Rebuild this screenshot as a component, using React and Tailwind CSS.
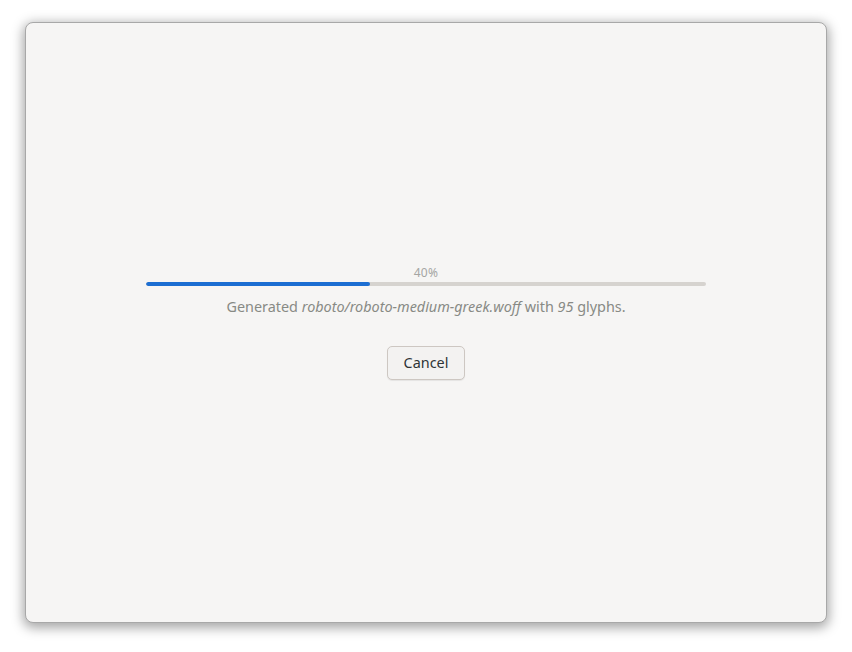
export default function App() {
  const progress = 0.4;
  return (
    <div className="flex h-[652px] w-[852px] bg-white p-0" style={{ fontFamily: '"Noto Sans", "Open Sans", sans-serif' }}>
      <div className="ml-[25px] mt-[22px] flex h-[601px] w-[802px] flex-col items-center justify-center rounded-[8px] border border-[#a8a8a8] bg-[#f6f5f4] pt-[24px] shadow-[0_3px_12px_2px_rgba(0,0,0,0.35)]">
        <div className="flex w-[560px] flex-col items-center">
          <div className="mt-[-24px] text-[12px] leading-[14px] tracking-[0.3px] text-[#a5a5a3]">40%</div>
          <div className="mt-[2px] h-[4px] w-[560px] overflow-hidden rounded-full bg-[#d6d3cf]">
            <div className="h-full rounded-full bg-[#1c6ed2]" style={{ width: `${progress * 100}%` }} />
          </div>
          <p className="mt-[11px] text-[14.4px] leading-[20px] text-[#888a85]">
            Generated <i>roboto/roboto-medium-greek.woff</i> with <i>95</i> glyphs.
          </p>
          <button
            type="button"
            className="mt-[29px] h-[34px] w-[78px] rounded-[5px] border border-[#cdc7c2] bg-[#f3f2f1] text-[14.4px] text-[#2e3436] shadow-[0_1px_1px_rgba(0,0,0,0.07)]"
          >
            Cancel
          </button>
        </div>
      </div>
    </div>
  );
}
